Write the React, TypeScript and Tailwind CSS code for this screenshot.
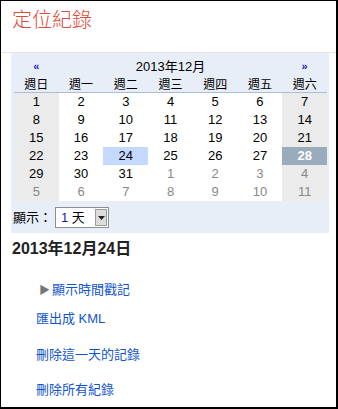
import React from "react";

const weekDays = ["週日", "週一", "週二", "週三", "週四", "週五", "週六"];

const weeks = [
  [1, 2, 3, 4, 5, 6, 7],
  [8, 9, 10, 11, 12, 13, 14],
  [15, 16, 17, 18, 19, 20, 21],
  [22, 23, 24, 25, 26, 27, 28],
  [29, 30, 31, 1, 2, 3, 4],
  [5, 6, 7, 8, 9, 10, 11],
];

const font = "font-['Liberation_Sans','Noto_Sans_CJK_TC',sans-serif]";

const App = () => {
  return (
    <div
      className={`w-[338px] h-[409px] bg-white border-l border-t border-r-2 border-b-2 border-black overflow-hidden ${font}`}
    >
      {/* header */}
      <div className="h-[52px] border-b border-[#e5e5e5] pl-[11px] pt-[5px]">
        <h1 className="text-[20px] leading-[26px] text-[#dd4b39] font-['Noto_Sans_CJK_TC',sans-serif] font-light">
          定位紀錄
        </h1>
      </div>

      {/* calendar panel */}
      <div className="ml-[10px] w-[318px] bg-[#e8eef7] pl-[3px] pb-[5px]">
        <div className="w-[313px]">
          <div className="grid grid-cols-7 h-[24px] items-center text-[13px] text-black">
            <div className="text-center text-[#2222cc] text-[11px] font-bold pt-[2px]">«</div>
            <div className="col-span-5 text-center pt-[3px]">2013年12月</div>
            <div className="text-center text-[#2222cc] text-[11px] font-bold pt-[2px]">»</div>
          </div>
          <div className="grid grid-cols-7 h-[16px] items-center border-b border-[#aabbdd] text-[12px] text-black leading-none">
            {weekDays.map((d) => (
              <div key={d} className="text-center">
                {d}
              </div>
            ))}
          </div>
          {weeks.map((w, wi) => (
            <div key={wi} className="grid grid-cols-7 h-[18px] text-[13px] leading-[18px]">
              {w.map((d, di) => {
                const other = (wi === 4 && d < 10) || wi === 5;
                const weekend = di === 0 || di === 6;
                const selected = wi === 3 && d === 24;
                const today = wi === 3 && d === 28;
                let cls = weekend ? "bg-[#ebebeb]" : "bg-white";
                if (selected) cls = "bg-[#c3d9ff]";
                if (today) cls = "bg-[#9aabbc] text-white font-bold";
                else if (other) cls += " text-[#888888]";
                else cls += " text-black";
                return (
                  <div key={di} className={`text-center ${cls}`}>
                    {d}
                  </div>
                );
              })}
            </div>
          ))}
          <div className="flex items-center mt-[6px] h-[21px] text-[13px] text-black">
            <span className="ml-[-1px]">顯示：</span>
            <div className="ml-[3px] flex items-center w-[54px] h-[21px] border border-[#8e8e8e] bg-white">
              <span className="flex-1 pl-[5px] leading-none">
                <span className="text-[#1a1aa6]">1</span> 天
              </span>
              <div className="w-[12px] h-[17px] mr-[1px] bg-[#dcdcdc] border border-[#9a9a9a] flex items-center justify-center">
                <svg width="7" height="4" viewBox="0 0 7 4">
                  <path d="M0 0h7L3.5 4z" fill="#222" />
                </svg>
              </div>
            </div>
          </div>
        </div>
      </div>

      {/* selected date */}
      <div className="pl-[11px] pt-[6px]">
        <h2 className="text-[16px] font-bold text-[#222] leading-[20px]">2013年12月24日</h2>
      </div>

      <div className="pl-[35px] text-[13px] text-[#1155cc]">
        <div className="mt-[22px] h-[18px] flex items-center pl-[3px]">
          <span className="text-[#777] text-[11px] mr-[2px]">▶</span>
          <span>顯示時間戳記</span>
        </div>
        <div className="mt-[11px] h-[18px] leading-[18px]">匯出成 KML</div>
        <div className="mt-[18px] h-[18px] leading-[18px]">刪除這一天的記錄</div>
        <div className="mt-[17px] h-[18px] leading-[18px]">刪除所有紀錄</div>
      </div>
    </div>
  );
};

export default App;
